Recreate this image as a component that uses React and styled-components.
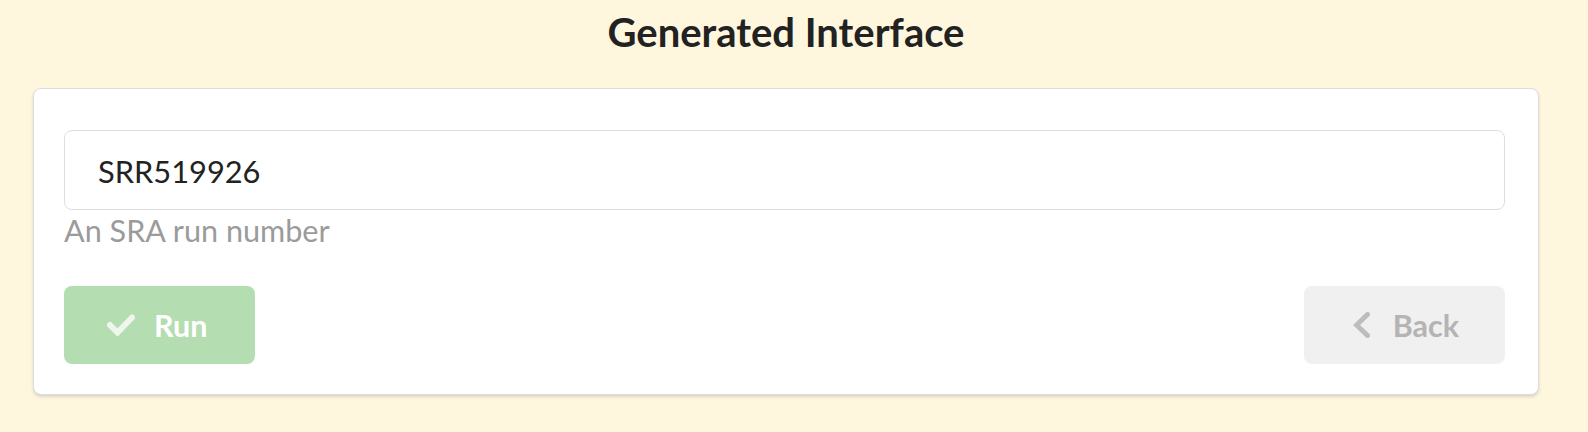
import React from "react";
import styled, { createGlobalStyle } from "styled-components";

const Global = createGlobalStyle`
  html, body {
    margin: 0;
    padding: 0;
    background: #fef7de;
    font-family: Lato, "Open Sans", "Liberation Sans", sans-serif;
  }
  * { box-sizing: border-box; }
`;

const Page = styled.div`
  display: flex;
  flex-direction: column;
  align-items: stretch;
  padding: 0 49px 38px 33px;
`;

const Title = styled.h1`
  margin: 0 0 32px;
  padding-top: 8px;
  font-size: 40px;
  line-height: 48px;
  font-weight: 700;
  color: #222222;
  text-align: center;
`;

const Card = styled.div`
  display: flex;
  flex-direction: column;
  background: #ffffff;
  border: 1px solid #dcdcdd;
  border-radius: 8px;
  box-shadow: 0 2px 3px 0 rgba(34, 36, 38, 0.15);
  padding: 41px 33px 30px 30px;
`;

const Field = styled.div`
  display: flex;
  flex-direction: column;
  gap: 3px;
`;

const Input = styled.input`
  height: 80px;
  width: 100%;
  padding: 3px 33px 0;
  border: 1px solid #dededf;
  border-radius: 8px;
  font-family: inherit;
  font-size: 30.8px;
  color: #222222;
  background: #ffffff;
  outline: none;
`;

const Help = styled.div`
  font-size: 30.6px;
  line-height: 36px;
  color: #9b9b9b;
`;

const Actions = styled.div`
  display: flex;
  justify-content: space-between;
  align-items: center;
  margin-top: 37px;
`;

const Button = styled.button`
  display: inline-flex;
  align-items: center;
  height: 78px;
  padding: ${(p) => p.$pad};
  gap: ${(p) => p.$gap};
  border: none;
  border-radius: 8px;
  background: ${(p) => p.$bg};
  color: ${(p) => p.$fg};
  font-family: inherit;
  font-size: 30.5px;
  font-weight: 700;
  line-height: 1;
  cursor: default;
`;

const Icon = styled.svg`
  display: block;
  flex: none;
`;

export default function App() {
  return (
    <>
      <Global />
      <Page>
        <Title>Generated Interface</Title>
        <Card>
          <Field>
            <Input defaultValue="SRR519926" />
            <Help>An SRA run number</Help>
          </Field>
          <Actions>
            <Button $bg="#b4ddb1" $fg="#ffffff" $pad="0 48px 0 43px" $gap="19px" disabled>
              <Icon width="28" height="22" viewBox="0 0 28 22">
                <polyline
                  points="3,11 10.5,18.5 25,3.5"
                  fill="none"
                  stroke="#eef6ed"
                  strokeWidth="6"
                  strokeLinecap="round"
                  strokeLinejoin="miter"
                />
              </Icon>
              Run
            </Button>
            <Button $bg="#f0f0f0" $fg="#b4b4b4" $pad="0 46px 0 49px" $gap="23px" disabled>
              <Icon width="17" height="26" viewBox="0 0 17 26">
                <polyline
                  points="14.5,2.5 3.5,13 14.5,23.5"
                  fill="none"
                  stroke="#bdbdbd"
                  strokeWidth="5"
                  strokeLinecap="round"
                  strokeLinejoin="miter"
                />
              </Icon>
              Back
            </Button>
          </Actions>
        </Card>
      </Page>
    </>
  );
}
